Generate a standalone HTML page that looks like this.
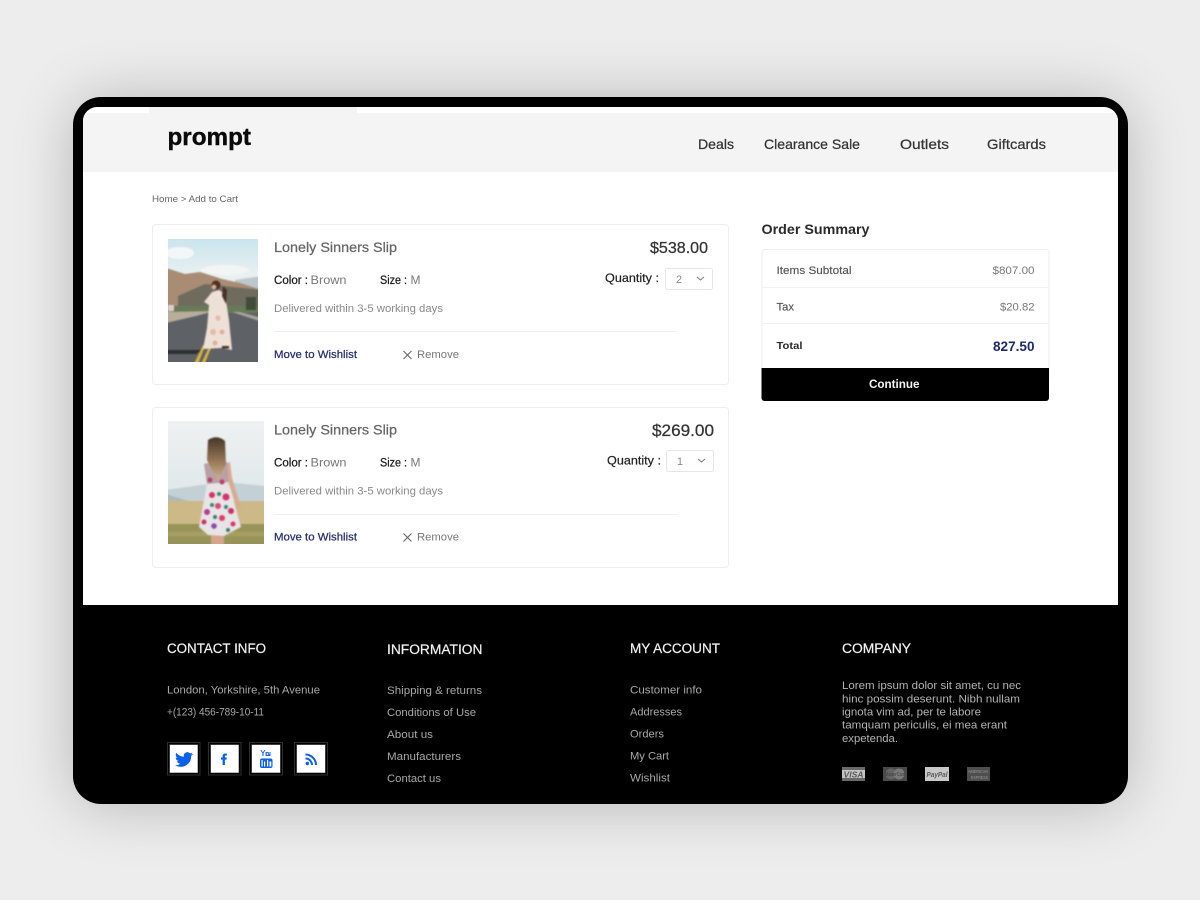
<!DOCTYPE html>
<html lang="en">
<head>
<meta charset="utf-8">
<title>prompt - Add to Cart</title>
<style>
html,body{margin:0;padding:0;width:1200px;height:900px;overflow:hidden;background:#ededed}
#device{position:absolute;left:73px;top:97px;width:1055px;height:707px;background:#000;border-radius:28px;box-shadow:0 2px 60px rgba(0,0,0,.23)}
#stage{position:absolute;left:0;top:0;width:1200px;height:900px}
text{font-family:"Liberation Sans",sans-serif;white-space:pre}
.nav{font-size:14px;fill:#333;stroke:#333;stroke-width:.25}
.title{font-size:14px;fill:#666;stroke:#666;stroke-width:.25}
.lab{font-size:11.5px;fill:#1c1c1c;stroke:#1c1c1c;stroke-width:.25}
.val{font-size:11.5px;fill:#777}
.del{font-size:11px;fill:#8a8a8a}
.wish{font-size:11px;fill:#27306e;stroke:#27306e;stroke-width:.25}
.rem{font-size:11px;fill:#777}
.qty{font-size:11.5px;fill:#222;stroke:#222;stroke-width:.2}
.opt{font-size:11px;fill:#888}
.sum{font-size:11px;fill:#555;stroke:#555;stroke-width:.15}
.amt{font-size:11px;fill:#777}
.fh{font-size:13.5px;fill:#f2f2f2;stroke:#f2f2f2;stroke-width:.2}
.fl{font-size:11px;fill:#a8a8a8}
</style>
</head>
<body>
<div id="device"></div>
<svg id="stage" width="1200" height="900" viewBox="0 0 1200 900" xmlns="http://www.w3.org/2000/svg">
<defs>
<clipPath id="scr"><path d="M97 107H1104a14 14 0 0 1 14 14V605H83V121a14 14 0 0 1 14-14z"/></clipPath>
<clipPath id="p1"><rect x="168" y="239" width="90" height="123"/></clipPath>
<clipPath id="p2"><rect x="168" y="421" width="96" height="123"/></clipPath>
<filter id="b1" x="-5%" y="-5%" width="110%" height="110%" color-interpolation-filters="sRGB"><feGaussianBlur stdDeviation=".8"/></filter>
<linearGradient id="sky1" x1="0" y1="0" x2="0" y2="1"><stop offset="0" stop-color="#c9e4ee"/><stop offset=".3" stop-color="#e8f0f1"/></linearGradient>
<linearGradient id="sky2" x1="0" y1="0" x2="0" y2="1"><stop offset="0" stop-color="#eff1f1"/><stop offset=".5" stop-color="#e2e9eb"/></linearGradient>
<linearGradient id="hair" x1="0" y1="0" x2="0" y2="1"><stop offset="0" stop-color="#46352a"/><stop offset=".5" stop-color="#8f7050"/><stop offset="1" stop-color="#d0b288"/></linearGradient>
</defs>

<!-- screen -->
<g clip-path="url(#scr)">
<rect x="83" y="107" width="1035" height="498" fill="#fff"/>
<rect x="83" y="113" width="1035" height="59" fill="#f4f4f4"/>
<rect x="149" y="107" width="208" height="6" fill="#f4f4f4"/>
</g>

<!-- header -->
<text x="167.500" y="145" font-size="24" font-weight="700" fill="#0a0a0a" stroke="#0a0a0a" stroke-width=".4" textLength="83.500" lengthAdjust="spacingAndGlyphs">prompt</text>
<text class="nav" x="698" y="149" textLength="36" lengthAdjust="spacingAndGlyphs">Deals</text>
<text class="nav" x="764" y="149" textLength="96" lengthAdjust="spacingAndGlyphs">Clearance Sale</text>
<text class="nav" x="900" y="149" textLength="49" lengthAdjust="spacingAndGlyphs">Outlets</text>
<text class="nav" x="987" y="149" textLength="59" lengthAdjust="spacingAndGlyphs">Giftcards</text>
<text x="152" y="202" font-size="9.5" fill="#666" textLength="86" lengthAdjust="spacingAndGlyphs">Home &gt; Add to Cart</text>

<!-- card 1 -->
<rect x="152.5" y="224.5" width="576" height="160" rx="3" fill="#fff" stroke="#eeeeee"/>
<g clip-path="url(#p1)"><g filter="url(#b1)">
<rect x="166" y="237" width="94" height="127" fill="url(#sky1)"/>
<ellipse cx="180" cy="253" rx="14" ry="6" fill="#f4f7f7"/>
<ellipse cx="225" cy="270" rx="24" ry="5" fill="#f3f5f4"/>
<path d="M235 280L262 276V300H235z" fill="#bcc8cc"/>
<path d="M166 268L185 274 200 272 222 279 240 283 262 290V312H166z" fill="#a88c73"/>
<path d="M178 296L205 284 232 287 262 290V310H178z" fill="#6f6c5e"/>
<path d="M172 306H262V313H172z" fill="#677b58"/>
<rect x="246" y="297" width="10" height="13" fill="#3f4d39"/>
<rect x="168" y="305" width="6" height="6" fill="#dcd0cc"/>
<path d="M166 313H262V364H166z" fill="#5e6165"/>
<path d="M166 312L215 311 196 316 166 323z" fill="#b9ad9c"/>
<path d="M240 312L262 318V322L232 312z" fill="#a8a49c"/>
<path d="M166 350H202L196 354H166z" fill="#2c2e31"/>
<path d="M194 364L203 345 205.500 345 198 364zM201 364L209 347 211.500 347 204.500 364z" fill="#d9b43c"/>
<path d="M212 292L219 290 225 294 229 320 232 350 221 348 203 349 207 328 209 305 204 302z" fill="#eee0d6"/>
<circle cx="216" cy="285" r="4.500" fill="#4b3028"/>
<path d="M223 286L227 290 226 304 222 296z" fill="#4b3028"/>
<circle cx="214" cy="287" r="2.400" fill="#d7ab90"/>
<circle cx="218" cy="318" r="2.600" fill="#e3bca4"/><circle cx="213" cy="332" r="3" fill="#e3bca4"/><circle cx="222" cy="332" r="2.400" fill="#dfb096"/><circle cx="215" cy="343" r="2.400" fill="#dfb096"/>
<rect x="222" y="346" width="7" height="2.500" fill="#4a2f28"/>
</g></g>
<text class="title" x="274" y="252" textLength="123" lengthAdjust="spacingAndGlyphs">Lonely Sinners Slip</text>
<text class="lab" x="274" y="284" textLength="34" lengthAdjust="spacingAndGlyphs">Color :</text>
<text class="val" x="310.500" y="284" textLength="36" lengthAdjust="spacingAndGlyphs">Brown</text>
<text class="lab" x="380" y="284" textLength="27" lengthAdjust="spacingAndGlyphs">Size :</text>
<text class="val" x="410.500" y="284" textLength="10" lengthAdjust="spacingAndGlyphs">M</text>
<text class="del" x="274" y="312" textLength="169" lengthAdjust="spacingAndGlyphs">Delivered within 3-5 working days</text>
<rect x="274" y="331" width="403" height="1" fill="#eeeeee"/>
<text class="wish" x="274" y="358" textLength="83" lengthAdjust="spacingAndGlyphs">Move to Wishlist</text>
<path d="M403.500 351L411.500 359M411.500 351L403.500 359" stroke="#666" stroke-width="1.100" fill="none"/>
<text class="rem" x="417" y="358" textLength="42" lengthAdjust="spacingAndGlyphs">Remove</text>
<text x="650" y="253" font-size="15.500" fill="#333" stroke="#333" stroke-width=".25" textLength="58" lengthAdjust="spacingAndGlyphs">$538.00</text>
<text class="qty" x="605" y="282" textLength="54" lengthAdjust="spacingAndGlyphs">Quantity :</text>
<rect x="665.500" y="268.500" width="47" height="21" rx="2" fill="#fff" stroke="#e6e6e6"/>
<text class="opt" x="676" y="283" textLength="6" lengthAdjust="spacingAndGlyphs">2</text>
<path d="M697 277L700.500 280 704 277" stroke="#777" fill="none"/>

<!-- card 2 -->
<rect x="152.5" y="407.5" width="576" height="160" rx="3" fill="#fff" stroke="#eeeeee"/>
<g clip-path="url(#p2)"><g filter="url(#b1)">
<rect x="166" y="419" width="100" height="127" fill="url(#sky2)"/>
<path d="M166 490L200 485 235 483 266 486V505H166z" fill="#c3d1d7"/>
<path d="M166 494L185 500 200 503H166z" fill="#adbaba"/>
<rect x="166" y="501" width="100" height="25" fill="#cdb888"/>
<rect x="166" y="524" width="100" height="22" fill="#97945a"/>
<path d="M166 532H266V536H166z" fill="#a89e62"/>
<rect x="211" y="525" width="13" height="21" fill="#d5a58c"/>
<path d="M224 464L230 462 232 478 241 507 238 510 229 484z" fill="#d7ab90"/>
<path d="M204 464L212 462 227 462 229 482 207 484z" fill="#b8a0a6"/>
<path d="M207 484L229 484 241 527 224 536 208 535 199 527z" fill="#e8e4e6"/>
<path d="M208 440Q217 434 225 441L226 464 218 480 211 468 207 460z" fill="url(#hair)"/>
<circle cx="210" cy="480" r="2.500" fill="#b8406a"/><circle cx="222" cy="482" r="2.500" fill="#c23a6c"/>
<circle cx="212" cy="495" r="3" fill="#d8316c"/><circle cx="226" cy="497" r="3.500" fill="#d8316c"/><circle cx="218" cy="506" r="3" fill="#d64a7a"/><circle cx="207" cy="512" r="3" fill="#b13c9a"/><circle cx="231" cy="511" r="3" fill="#cf2e66"/><circle cx="222" cy="518" r="3" fill="#e03a6e"/><circle cx="204" cy="522" r="2.500" fill="#c92f6b"/><circle cx="214" cy="526" r="2.800" fill="#8d4aa8"/><circle cx="233" cy="524" r="2.500" fill="#d4366d"/>
<circle cx="219" cy="494" r="2" fill="#2e8a6c"/><circle cx="212" cy="505" r="2" fill="#2e8a6c"/><circle cx="226" cy="507" r="2" fill="#2e8a6c"/><circle cx="215" cy="517" r="2" fill="#2e7f68"/><circle cx="228" cy="530" r="2" fill="#2e7f68"/>
</g></g>
<text class="title" x="274" y="434.500" textLength="123" lengthAdjust="spacingAndGlyphs">Lonely Sinners Slip</text>
<text class="lab" x="274" y="466.500" textLength="34" lengthAdjust="spacingAndGlyphs">Color :</text>
<text class="val" x="310.500" y="466.500" textLength="36" lengthAdjust="spacingAndGlyphs">Brown</text>
<text class="lab" x="380" y="466.500" textLength="27" lengthAdjust="spacingAndGlyphs">Size :</text>
<text class="val" x="410.500" y="466.500" textLength="10" lengthAdjust="spacingAndGlyphs">M</text>
<text class="del" x="274" y="494.500" textLength="169" lengthAdjust="spacingAndGlyphs">Delivered within 3-5 working days</text>
<rect x="274" y="514" width="403" height="1" fill="#eeeeee"/>
<text class="wish" x="274" y="540.500" textLength="83" lengthAdjust="spacingAndGlyphs">Move to Wishlist</text>
<path d="M403.500 533.500L411.500 541.500M411.500 533.500L403.500 541.500" stroke="#666" stroke-width="1.100" fill="none"/>
<text class="rem" x="417" y="540.500" textLength="42" lengthAdjust="spacingAndGlyphs">Remove</text>
<text x="652" y="436" font-size="16.500" fill="#333" stroke="#333" stroke-width=".25" textLength="62" lengthAdjust="spacingAndGlyphs">$269.00</text>
<text class="qty" x="607" y="464.500" textLength="54" lengthAdjust="spacingAndGlyphs">Quantity :</text>
<rect x="666.500" y="450.500" width="47" height="21" rx="2" fill="#fff" stroke="#e6e6e6"/>
<text class="opt" x="677" y="465" textLength="6" lengthAdjust="spacingAndGlyphs">1</text>
<path d="M698 459L701.500 462 705 459" stroke="#777" fill="none"/>

<!-- order summary -->
<text x="761.500" y="234" font-size="13.500" font-weight="700" fill="#2a2a2a" textLength="108" lengthAdjust="spacingAndGlyphs">Order Summary</text>
<rect x="762" y="249.500" width="287" height="130" rx="3" fill="#fff" stroke="#eeeeee"/>
<rect x="763" y="287" width="285" height="1" fill="#f0f0f0"/>
<rect x="763" y="323" width="285" height="1" fill="#f0f0f0"/>
<text class="sum" x="776.500" y="274" textLength="75" lengthAdjust="spacingAndGlyphs">Items Subtotal</text>
<text class="amt" x="992.500" y="274" textLength="42" lengthAdjust="spacingAndGlyphs">$807.00</text>
<text class="sum" x="776.500" y="310.500" textLength="17.500" lengthAdjust="spacingAndGlyphs">Tax</text>
<text class="amt" x="1000" y="310.500" textLength="34.500" lengthAdjust="spacingAndGlyphs">$20.82</text>
<text x="776.500" y="349" font-size="10.500" font-weight="700" fill="#2a2a2a" textLength="26" lengthAdjust="spacingAndGlyphs">Total</text>
<text x="993" y="351" font-size="13.500" font-weight="700" fill="#1f2a6b" textLength="41.500" lengthAdjust="spacingAndGlyphs">827.50</text>
<path d="M761.500 368H1049V398a3 3 0 0 1-3 3H764.500a3 3 0 0 1-3-3z" fill="#000"/>
<text x="869" y="388" font-size="11.500" font-weight="700" fill="#f5f5f5" textLength="50.500" lengthAdjust="spacingAndGlyphs">Continue</text>

<!-- footer -->
<text class="fh" x="167" y="653" textLength="99" lengthAdjust="spacingAndGlyphs">CONTACT INFO</text>
<text class="fh" x="387" y="654" textLength="95.500" lengthAdjust="spacingAndGlyphs">INFORMATION</text>
<text class="fh" x="630" y="653" textLength="90" lengthAdjust="spacingAndGlyphs">MY ACCOUNT</text>
<text class="fh" x="842" y="653" textLength="69" lengthAdjust="spacingAndGlyphs">COMPANY</text>

<text class="fl" x="167" y="693.500" textLength="153" lengthAdjust="spacingAndGlyphs">London, Yorkshire, 5th Avenue</text>
<text class="fl" x="167" y="715.500" textLength="97" lengthAdjust="spacingAndGlyphs">+(123) 456-789-10-11</text>

<text class="fl" x="387" y="694" textLength="95" lengthAdjust="spacingAndGlyphs">Shipping &amp; returns</text>
<text class="fl" x="387" y="716" textLength="89" lengthAdjust="spacingAndGlyphs">Conditions of Use</text>
<text class="fl" x="387" y="738" textLength="46" lengthAdjust="spacingAndGlyphs">About us</text>
<text class="fl" x="387" y="760" textLength="74" lengthAdjust="spacingAndGlyphs">Manufacturers</text>
<text class="fl" x="387" y="782" textLength="54" lengthAdjust="spacingAndGlyphs">Contact us</text>

<text class="fl" x="630" y="693.500" textLength="72" lengthAdjust="spacingAndGlyphs">Customer info</text>
<text class="fl" x="630" y="715.500" textLength="52" lengthAdjust="spacingAndGlyphs">Addresses</text>
<text class="fl" x="630" y="737.500" textLength="34" lengthAdjust="spacingAndGlyphs">Orders</text>
<text class="fl" x="630" y="759.500" textLength="39" lengthAdjust="spacingAndGlyphs">My Cart</text>
<text class="fl" x="630" y="781.500" textLength="40" lengthAdjust="spacingAndGlyphs">Wishlist</text>

<text class="fl" x="842" y="689" textLength="179" lengthAdjust="spacingAndGlyphs" style="fill:#b4b4b4">Lorem ipsum dolor sit amet, cu nec</text>
<text class="fl" x="842" y="702.500" textLength="178" lengthAdjust="spacingAndGlyphs" style="fill:#b4b4b4">hinc possim deserunt. Nibh nullam</text>
<text class="fl" x="842" y="715.500" textLength="139" lengthAdjust="spacingAndGlyphs" style="fill:#b4b4b4">ignota vim ad, per te labore</text>
<text class="fl" x="842" y="728.500" textLength="165" lengthAdjust="spacingAndGlyphs" style="fill:#b4b4b4">tamquam periculis, ei mea erant</text>
<text class="fl" x="842" y="742" textLength="56" lengthAdjust="spacingAndGlyphs" style="fill:#b4b4b4">expetenda.</text>

<!-- social icons -->
<g fill="#000" stroke="#2e2e2e">
<rect x="167.500" y="742.500" width="32.500" height="32.500"/>
<rect x="208.500" y="742.500" width="32.500" height="32.500"/>
<rect x="249.500" y="742.500" width="33" height="32.500"/>
<rect x="294.500" y="742.500" width="33" height="32.500"/>
</g>
<g fill="#fff" stroke="#777" stroke-width=".5">
<rect x="169.750" y="744.750" width="28" height="28"/>
<rect x="210.750" y="744.750" width="28" height="28"/>
<rect x="251.750" y="744.750" width="28.500" height="28"/>
<rect x="296.750" y="744.750" width="28.500" height="28"/>
</g>
<g fill="#0b5fe8">
<path transform="translate(175 750.500) scale(.75)" d="M23.950 4.570a10 10 0 0 1-2.820.770 4.960 4.960 0 0 0 2.160-2.720c-.950.550-2 .960-3.120 1.190a4.920 4.920 0 0 0-8.380 4.480C7.690 8.090 4.070 6.130 1.640 3.160a4.820 4.820 0 0 0-.670 2.480c0 1.710.870 3.210 2.190 4.100a4.900 4.900 0 0 1-2.230-.620v.060a4.920 4.920 0 0 0 3.950 4.830 5 5 0 0 1-2.210.080 4.940 4.940 0 0 0 4.600 3.420A9.870 9.870 0 0 1 0 19.540a14 14 0 0 0 7.560 2.210c9.050 0 14-7.500 14-13.980 0-.210 0-.420-.02-.63a9.940 9.940 0 0 0 2.460-2.550z"/>
<path d="M222.600 765V759.600H221V757.500H222.600V756.100C222.600 754.300 223.700 753.500 225.300 753.500L226.900 753.600V755.500H225.800C225 755.500 224.900 755.900 224.900 756.500V757.500H226.800L226.500 759.600H224.900V765z"/>
<rect x="260" y="758.500" width="12.500" height="9.500" rx="2"/>
<path d="M261.500 750L262.900 752.500 264.300 750H265.400L263.500 753.300V756H262.400V753.300L260.400 750zM265.600 752H270.500V756H265.600z"/>
<g fill="#fff"><rect x="266.800" y="752.800" width="1" height="2.300"/><rect x="268.700" y="752" width=".8" height="2.500"/><rect x="261.500" y="760" width="1.200" height="6.500"/><rect x="264" y="761.500" width="1.200" height="5"/><rect x="267" y="760" width="1.200" height="6.500"/><rect x="269.500" y="761.500" width="1.800" height="5"/></g>
<circle cx="307.300" cy="763.500" r="1.700"/>
<path d="M305.500 758.500A6.500 6.500 0 0 1 312 765M305.500 754.500A10.500 10.500 0 0 1 316 765" fill="none" stroke="#0b5fe8" stroke-width="2"/>
</g>

<!-- payment cards -->
<rect x="842" y="767" width="23" height="14" fill="#6a6a6a"/>
<rect x="842" y="770" width="23" height="8" fill="#c4c4c4"/>
<text x="843.500" y="777.500" font-size="8" font-weight="700" font-style="italic" fill="#5a5a5a" textLength="20" lengthAdjust="spacingAndGlyphs">VISA</text>
<rect x="883" y="767" width="24" height="14" fill="#4a4a4a"/>
<circle cx="891" cy="774" r="5.500" fill="#666"/><circle cx="899" cy="774" r="5.500" fill="#7a7a7a"/>
<text x="885" y="776" font-size="5" fill="#3a3a3a" textLength="20" lengthAdjust="spacingAndGlyphs">MasterCard</text>
<rect x="925" y="767" width="24" height="14" fill="#c8c8c8"/>
<text x="926.500" y="777" font-size="7.500" font-weight="700" font-style="italic" fill="#5a5a5a" textLength="21" lengthAdjust="spacingAndGlyphs">PayPal</text>
<rect x="967" y="767" width="23" height="14" fill="#4e4e4e"/>
<text x="968" y="773" font-size="4.500" fill="#999" textLength="20" lengthAdjust="spacingAndGlyphs">AMERICAN</text>
<text x="971" y="779" font-size="4.500" fill="#999" textLength="17" lengthAdjust="spacingAndGlyphs">EXPRESS</text>
</svg>
</body>
</html>
